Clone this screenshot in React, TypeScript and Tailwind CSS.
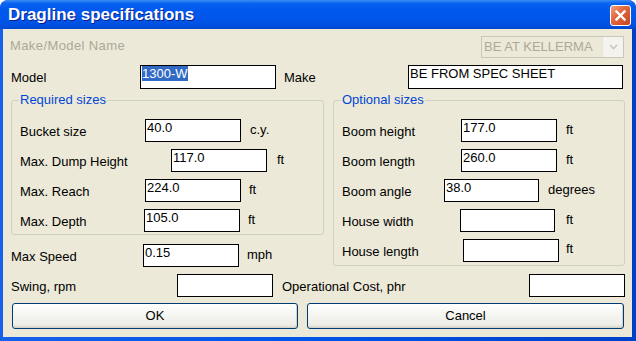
import React from "react";

const FONT = "font-['Liberation_Sans',Arial,sans-serif]";

function Field({ w, h = "h-[23px]", value, selected }: { w: string; h?: string; value?: string; selected?: boolean }) {
  return (
    <div className={`${w} ${h} shrink-0 border border-black bg-white pl-[1px] pt-[1px] text-[13px] leading-[14px] text-black whitespace-nowrap overflow-hidden`}>
      {selected ? <span className="bg-[#316AC5] text-white">{value}</span> : value}
    </div>
  );
}

function Row({ label, lw, fw = "w-[96px]", value, unit, um }: { label: string; lw: string; fw?: string; value?: string; unit?: string; um?: string }) {
  return (
    <div className="flex items-center h-[23px]">
      <span className={`${lw} shrink-0 mt-[2px] whitespace-nowrap`}>{label}</span>
      <Field w={fw} value={value} />
      {unit && <span className={`${um} whitespace-nowrap`}>{unit}</span>}
    </div>
  );
}

function Group({ title, w, h, children }: { title: string; w: string; h: string; children: React.ReactNode }) {
  return (
    <div className={`relative ${w} ${h} shrink-0 border border-[#D0D0BF] rounded-[3px] pl-[8px] pt-[18px] flex flex-col gap-[7px]`}>
      <span className="absolute left-[7px] -top-[9px] px-[1px] bg-[#ECE9D8] text-[#0046D5] leading-[15px]">{title}</span>
      {children}
    </div>
  );
}

function XPButton({ w, children }: { w: string; children: React.ReactNode }) {
  return (
    <div className={`${w} h-[26px] shrink-0 rounded-[3px] border border-[#003C74] bg-[linear-gradient(to_bottom,#FFFFFF_0%,#F6F6F2_40%,#EEEDE7_85%,#D8D6CC_100%)] shadow-[inset_-1px_-1px_0_#D6D0C5] flex items-center justify-center text-black`}>
      {children}
    </div>
  );
}

export default function App() {
  return (
    <div className={`${FONT} w-[636px] h-[341px] flex flex-col rounded-t-[8px] overflow-hidden bg-[linear-gradient(to_right,#1660EA_0%,#0055E8_50%,#0040C8_100%)] text-[13px] text-black`}>
      {/* Title bar */}
      <div className="h-[29px] shrink-0 flex items-center justify-between pl-[8px] pr-[5px] bg-[linear-gradient(to_bottom,#3A8DF6_0%,#0A62F0_12%,#0058EE_35%,#0056EA_65%,#0050E0_88%,#0046CC_100%)]">
        <span className="text-white font-bold text-[17px] leading-[20px] mt-[1px] [text-shadow:1px_1px_0_#0A1E8A]">Dragline specifications</span>
        <div className="w-[21px] h-[21px] mt-[2px] rounded-[3px] border border-white bg-[linear-gradient(135deg,#F0A080_0%,#E3683F_40%,#C8441E_100%)] flex items-center justify-center">
          <svg width="13" height="13" viewBox="0 0 13 13">
            <path d="M2.5 2.5 L10.5 10.5 M10.5 2.5 L2.5 10.5" stroke="white" strokeWidth="2.4" strokeLinecap="square" />
          </svg>
        </div>
      </div>

      {/* Client area */}
      <div className="flex-1 ml-[3px] mr-[4px] mb-[4px] bg-[#ECE9D8] flex flex-col">
        {/* Row 1 */}
        <div className="mt-[7px] h-[22px] flex items-start justify-between pl-[7px] pr-[8px]">
          <span className="mt-[2px] text-[#ACA899] leading-[15px] tracking-[0.4px]">Make/Model Name</span>
          <div className="w-[143px] h-[22px] border border-[#C9C7BA] flex items-center">
            <span className="flex-1 pl-[2px] text-[#ACA899] whitespace-nowrap overflow-hidden">BE AT KELLERMA</span>
            <div className="w-[21px] h-[20px] bg-[#F4F3EE] border-l border-[#E6E4DA] flex items-center justify-center">
              <svg width="9" height="6" viewBox="0 0 9 6">
                <path d="M1 1 L4.5 4.5 L8 1" stroke="#C9C7BA" strokeWidth="1.6" fill="none" />
              </svg>
            </div>
          </div>
        </div>

        {/* Row 2 */}
        <div className="mt-[7px] h-[24px] flex items-center pl-[8px]">
          <span className="w-[129px] shrink-0 mt-[2px]">Model</span>
          <Field w="w-[136px]" h="h-[24px]" value="1300-W" selected />
          <span className="w-[124px] shrink-0 ml-[8px] mt-[1px]">Make</span>
          <Field w="w-[215px]" h="h-[24px]" value="BE FROM SPEC SHEET" />
        </div>

        {/* Groups */}
        <div className="mt-[11px] flex items-start pl-[8px]">
          <div className="flex flex-col">
            <Group title="Required sizes" w="w-[313px]" h="h-[135px]">
              <Row label="Bucket size" lw="w-[125px]" value="40.0" unit="c.y." um="ml-[9px] -mt-[1px]" />
              <Row label="Max. Dump Height" lw="w-[151px]" value="117.0" unit="ft" um="ml-[10px] -mt-[1px]" />
              <Row label="Max. Reach" lw="w-[125px]" value="224.0" unit="ft" um="ml-[8px] -mt-[1px]" />
              <Row label="Max. Depth" lw="w-[124px]" value="105.0" unit="ft" um="ml-[8px] -mt-[1px]" />
            </Group>
            <div className="mt-[9px] h-[23px] flex items-center">
              <span className="w-[132px] shrink-0 mt-[2px]">Max Speed</span>
              <Field w="w-[96px]" value="0.15" />
              <span className="ml-[8px] -mt-[1px]">mph</span>
            </div>
          </div>
          <div className="ml-[9px]">
            <Group title="Optional sizes" w="w-[292px]" h="h-[166px]">
              <Row label="Boom height" lw="w-[119px]" value="177.0" unit="ft" um="ml-[9px] -mt-[1px]" />
              <Row label="Boom length" lw="w-[119px]" value="260.0" unit="ft" um="ml-[9px] -mt-[1px]" />
              <Row label="Boom angle" lw="w-[102px]" fw="w-[95px]" value="38.0" unit="degrees" um="ml-[9px] -mt-[1px]" />
              <Row label="House width" lw="w-[118px]" fw="w-[95px]" unit="ft" um="ml-[11px] -mt-[1px]" />
              <Row label="House length" lw="w-[121px]" unit="ft" um="ml-[7px] -mt-[3px]" />
            </Group>
          </div>
        </div>

        {/* Swing row */}
        <div className="mt-[7px] h-[23px] flex items-center pl-[8px]">
          <span className="w-[166px] shrink-0 mt-[2px]">Swing, rpm</span>
          <Field w="w-[96px]" />
          <span className="w-[247px] shrink-0 ml-[9px] mt-[2px] whitespace-nowrap">Operational Cost, phr</span>
          <Field w="w-[96px]" />
        </div>

        {/* Buttons */}
        <div className="mt-[6px] flex items-center pl-[9px] gap-[9px]">
          <XPButton w="w-[286px]">OK</XPButton>
          <XPButton w="w-[317px]">Cancel</XPButton>
        </div>
      </div>
    </div>
  );
}
